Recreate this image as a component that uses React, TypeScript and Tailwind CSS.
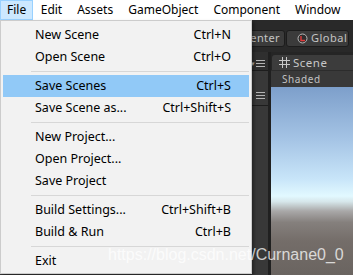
import type { ReactNode } from 'react'

type MenuEntry = { label: string; shortcut?: string; active?: boolean } | 'sep'

const fileMenu: MenuEntry[] = [
    { label: 'New Scene', shortcut: 'Ctrl+N' },
    { label: 'Open Scene', shortcut: 'Ctrl+O' },
    'sep',
    { label: 'Save Scenes', shortcut: 'Ctrl+S', active: true },
    { label: 'Save Scene as...', shortcut: 'Ctrl+Shift+S' },
    'sep',
    { label: 'New Project...' },
    { label: 'Open Project...' },
    { label: 'Save Project' },
    'sep',
    { label: 'Build Settings...', shortcut: 'Ctrl+Shift+B' },
    { label: 'Build & Run', shortcut: 'Ctrl+B' },
    'sep',
    { label: 'Exit' },
]

const topItems = ['File', 'Edit', 'Assets', 'GameObject', 'Component', 'Window']

function MenuIcon() {
    return (
        <svg width="9" height="7" viewBox="0 0 9 7">
            <path d="M0 0.5h9M0 3.5h9M0 6.5h9" stroke="#b4b4b4" strokeWidth="1" />
        </svg>
    )
}

function ToolButton({ children, className }: { children: ReactNode; className?: string }) {
    return (
        <div
            className={
                'h-[17px] flex items-center rounded-[3px] border border-[#1c1c1c] bg-[#3b3b3b] text-[11px] text-[#c4c4c4] ' +
                (className ?? '')
            }
        >
            {children}
        </div>
    )
}

/**
 * Unity editor behind the open File menu
 */
function Editor() {
    return (
        <div className="flex-1 flex flex-col bg-[#222]">
            <div className="h-[32px] bg-[#292929] flex justify-end items-start gap-[1px] pt-[10px] pr-[4px]">
                <ToolButton className="w-[60px] justify-end pr-[4px] tracking-[0.4px]">Center</ToolButton>
                <ToolButton className="w-[63px] pl-[10px] gap-[3px] tracking-[0.5px]">
                    <svg width="11" height="11" viewBox="0 0 11 11">
                        <circle cx="5.5" cy="5.5" r="4.5" fill="#2e2e2e" stroke="#b8b8b8" strokeWidth="1" />
                        <path d="M4 3v4.5h4" fill="none" stroke="#e23b3b" strokeWidth="1.4" />
                    </svg>
                    Global
                </ToolButton>
            </div>
            <div className="flex-1 flex">
                <div className="w-[268px] bg-[#383838] flex flex-col">
                    <div className="h-[19px] bg-[#2f2f2f] border-b border-[#1d1d1d] flex items-end justify-end pr-[3px] pb-[3px]">
                        <span className="text-[7px] leading-none text-[#b4b4b4] mr-[1px]">▾</span>
                        <MenuIcon />
                    </div>
                    <div className="h-[35px] border-b border-[#1d1d1d] flex items-end justify-end pr-[3px] pb-[6px]">
                        <MenuIcon />
                    </div>
                </div>
                <div className="w-[3px] bg-[#202020]" />
                <div className="flex-1 flex flex-col">
                    <div className="h-[18px] bg-[#252525] flex items-end pl-[1px]">
                        <div className="h-[15px] w-full bg-[#3c3c3c] rounded-tl-[3px] flex items-center pl-[7px] gap-[3px] text-[11.5px] text-[#c8c8c8] tracking-[0.5px]">
                            <svg width="11" height="11" viewBox="0 0 11 11">
                                <path d="M3.5 0v11M7.5 0v11M0 3.5h11M0 7.5h11" stroke="#c8c8c8" strokeWidth="1" />
                            </svg>
                            Scene
                        </div>
                    </div>
                    <div className="h-[17px] bg-[#393939] border-t border-[#2c2c2c] flex items-center pl-[11px] text-[10px] text-[#c2c2c2] tracking-[0.6px]">
                        Shaded
                    </div>
                    <div className="flex-1 bg-[linear-gradient(to_bottom,#7d9fcb_0%,#a5c4e5_28%,#c8e5f9_49%,#e2f9ff_58%,#d6e6ea_61%,#a9a8a8_66%,#85807d_72%,#746d69_82%,#6a6460_100%)]" />
                </div>
            </div>
        </div>
    )
}

export default function App() {
    return (
        <div
            className="relative w-[353px] h-[275px] overflow-hidden flex flex-col bg-[#222]"
            style={{ fontFamily: '"Noto Sans", "Open Sans", sans-serif' }}
        >
            <div className="h-[20px] bg-white flex items-stretch text-[12px] text-black">
                {topItems.map((item, i) => (
                    <div
                        key={item}
                        className={
                            i === 0
                                ? 'px-[6px] flex items-center bg-[#cce8ff] border border-[#99d1ff]'
                                : 'px-[6.5px] flex items-center border border-transparent'
                        }
                    >
                        {item}
                    </div>
                ))}
            </div>
            <Editor />

            <div className="absolute left-0 top-[20px] w-[252px] bg-[#f2f2f2] border border-[#cccccc] px-[2px] pt-[3px] pb-[1px] shadow-[2px_2px_3px_rgba(0,0,0,0.35)] text-[12.5px] text-black">
                {fileMenu.map((entry, i) =>
                    entry === 'sep' ? (
                        <div key={i} className="h-[7px] pt-[3px] pl-[28px]">
                            <div className="h-px bg-[#d7d7d7]" />
                        </div>
                    ) : (
                        <div
                            key={i}
                            className={
                                'h-[22px] flex items-center justify-between pl-[32px] pr-[18px] ' +
                                (entry.active ? 'bg-[#91c9f7]' : '')
                            }
                        >
                            <span>{entry.label}</span>
                            {entry.shortcut && <span>{entry.shortcut}</span>}
                        </div>
                    ),
                )}
            </div>

            <div
                className="absolute left-[108px] top-[247px] text-[16px] leading-[16px] text-white/75 whitespace-nowrap"
                style={{ fontFamily: '"Liberation Sans", Arial, sans-serif' }}
            >
                https://blog.csdn.net/Curnane0_0
            </div>
        </div>
    )
}
